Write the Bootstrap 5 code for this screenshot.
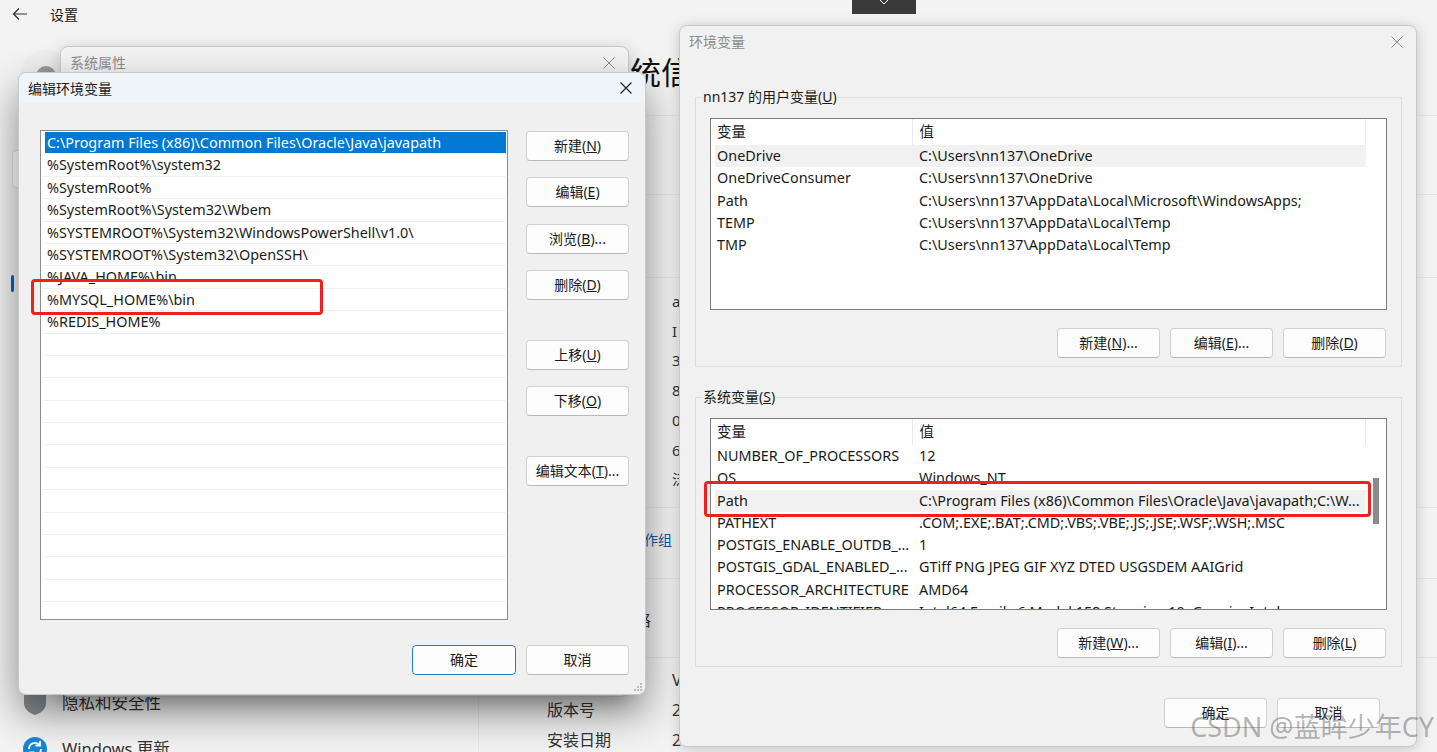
<!DOCTYPE html>
<html lang="zh-CN">
  <head>
    <meta charset="UTF-8" />
    <title>环境变量</title>
    <link href="https://cdn.jsdelivr.net/npm/bootstrap@5.3.3/dist/css/bootstrap.min.css" rel="stylesheet" />
    <style>
      html, body { height: 100%; }
      body {
        position: relative;
        overflow: hidden;
        background: #f3f3f3;
        color: #1a1a1a;
        font-family: "Noto Sans", "Noto Sans CJK SC", sans-serif;
        font-size: 14px;
      }

      /* settings app behind the dialogs */
      .app-head { height: 30px; padding-left: 12px; gap: 22px; padding-bottom: 2px; }
      .app-side {
        width: 479px;
        flex: none;
        height: 722px;
        padding: 0 12px;
        background: linear-gradient(#e6e6e6, #e6e6e6) right bottom / 1px 80px no-repeat;
      }
      .side-avatar { width: 20px; height: 20px; margin: 36px 0 0 24px; border-radius: 50%; background: #9a9a9a; box-shadow: 0 0 0 16px #eeeeee; }
      .side-search { height: 38px; margin: 64px 0 0 0; width: 200px; background: #fff; border: 1px solid #ddd; border-radius: 4px; }
      .side-mark { width: 3px; height: 17px; margin: 87px 0 0 -1px; background: #0067c0; border-radius: 2px; }
      .side-item { gap: 15px; font-size: 16.5px; color: #333; padding-left: 11px; }
      .side-item.first { margin-top: 398px; }
      .side-item.next { margin-top: 21px; }
      .app-main { flex: 1; padding-left: 68px; color: #333; font-size: 16px; }
      .main-title { font-size: 31px; line-height: 44px; margin: 20px 0 0 83px; color: #111; }
      .main-rule { height: 1px; background: #e4e4e4; margin-left: -68px; }
      .info-list { padding-left: 125px; font-size: 15px; line-height: 29.7px; margin-top: 9px; }
      .info-link { color: #0a5ca8; font-size: 14px; line-height: 24px; margin: 20px 0 0 83px; }
      .info-head { line-height: 24px; margin: 29px 0 0 88px; }
      .info-pairs { margin-top: 7px; line-height: 30px; }
      .info-pairs span:first-child { width: 125px; }

      /* dialog windows */
      .win {
        position: absolute;
        display: flex;
        flex-direction: column;
        background: #f0f0f0;
        border: 1px solid #c9c9c9;
        border-radius: 8px;
      }
      .win-back { left: 60px; top: 46px; width: 569px; height: 651px; background: #f3f3f3; box-shadow: 0 4px 18px rgba(0, 0, 0, 0.2); }
      .win-edit { left: 18px; top: 72px; width: 628px; height: 623px; box-shadow: 0 18px 40px rgba(0, 0, 0, 0.45); }
      .win-env { left: 679px; top: 25px; width: 738px; height: 722px; box-shadow: 0 2px 14px rgba(0, 0, 0, 0.2); background: #f1f1f1; }
      .win-title { height: 31px; flex: none; padding: 0 12px 0 9px; font-size: 14px; border-radius: 8px 8px 0 0; }
      .win-edit .win-title { height: 30px; background: #eff5f9; color: #222; }
      .win-back .win-title, .win-env .win-title { color: #8c8c8c; }
      .win-env .win-title { height: 31px; }
      .win-close { width: 14px; height: 14px; display: block; }
      .grip { position: absolute; right: 2px; bottom: 2px; width: 10px; height: 10px; }

      /* buttons */
      .btn.dlg-btn {
        width: 103px;
        height: 30px;
        padding: 0;
        background: #fdfdfd;
        border: 1px solid #d0d0d0;
        border-bottom-color: #b8b8b8;
        border-radius: 4px;
        color: #1a1a1a;
        font-size: 14px;
        line-height: 28px;
      }
      .btn.dlg-btn.is-default { width: 104px; border: 1.5px solid #1d7fd1; }

      /* path list */
      .edit-body { padding: 27px 16px 0 21px; gap: 18px; }
      .path-list { width: 469px; height: 490px; border: 1px solid #8d8d8d; overflow: hidden; background: #fff; border-radius: 0; padding: 1px 1px 0 2px; }
      .path-list .list-group-item {
        flex: none;
        height: 22.4px;
        line-height: 21px;
        padding: 0 0 0 4px;
        font-size: 14.4px;
        color: #1a1a1a;
        white-space: nowrap;
        border: 0;
        border-bottom: 1px solid #f0f0f0;
        border-radius: 0;
        background: #fff;
      }
      .path-list .list-group-item.active { background: #0078d4; color: #fff; margin-left: 2px; padding-left: 2px; }
      .edit-side { width: 103px; margin-top: 1px; }
      .edit-foot { gap: 10px; padding: 25px 16px 0 0; }

      /* variable groups */
      .group-box { margin: 0 14px 0 15px; padding: 0 14px; border: 1px solid #dcdcdc; height: 280px; }
      .group-box.top-group { margin-top: 30px; }
      .group-box + .group-box { margin-top: 20px; }
      .group-box legend { float: none; width: auto; margin: -10px 0 0 -7px; padding: 0 1px 0 0; font-size: 14px; line-height: 20px; background: #f1f1f1; }
      .var-view { height: 192px; margin-top: 11px; border: 1px solid #7e7e7e; background: #fff; overflow: hidden; position: relative; }
      .var-view .table { width: 651px; margin: 0 0 0 4px; table-layout: fixed; --bs-table-bg: transparent; }
      .var-view th, .var-view td {
        padding: 0 0 0 2px;
        height: 22.3px;
        line-height: 21px;
        border: 0;
        font-size: 14.4px;
        font-weight: 400;
        color: #1a1a1a;
        white-space: nowrap;
        overflow: hidden;
      }
      .var-view th { height: 26px; line-height: 26px; vertical-align: top; border-right: 1px solid #ebebeb; }
      .var-view th:first-child { width: 197px; }
      .var-view th:last-child, .var-view td:last-child { padding-left: 7px; }
      .var-view tr.soft td { background: #f1f1f1; }
      .scroll-thumb { position: absolute; right: 7px; top: 59px; width: 6px; height: 46px; background: #8a8a8a; }
      .group-btns { gap: 10px; margin-top: 18px; padding-right: 1px; }
      .env-foot { gap: 10px; padding: 31px 36px 0 0; }

      /* things laid over the picture */
      .red-box { position: absolute; border: 3px solid #f0201e; border-radius: 4px; pointer-events: none; }
      .red-left { left: 31px; top: 279px; width: 292px; height: 36px; }
      .red-right { left: 704px; top: 481px; width: 667px; height: 36px; }
      .top-tab { position: absolute; left: 852px; top: 0; width: 64px; height: 14px; background: #3a3a3a; }
      .top-tab svg { display: block; margin: 0 auto; }
      .mark-text { position: absolute; right: 3px; top: 709px; font-size: 27px; line-height: 36px; color: rgba(90, 90, 90, 0.45); white-space: nowrap; }
    </style>
  </head>
  <body>
    <!-- settings app -->
    <div class="d-flex align-items-center app-head">
      <svg width="16" height="14" viewBox="0 0 16 14" fill="none" stroke="#333" stroke-width="1.2"><path d="M15 7H1.5M7 1.5 1.5 7 7 12.5"/></svg>
      <span>设置</span>
    </div>
    <div class="d-flex">
      <div class="app-side">
        <div class="side-avatar"></div>
        <div class="side-search"></div>
        <div class="side-mark"></div>
        <div class="d-flex align-items-center side-item first">
          <svg width="24" height="26" viewBox="0 0 24 26"><path d="M12 1 23 5v8c0 6-5 10-11 12C6 23 1 19 1 13V5z" fill="#8a8f94"/></svg>
          <span>隐私和安全性</span>
        </div>
        <div class="d-flex align-items-center side-item next">
          <svg width="24" height="24" viewBox="0 0 24 24" fill="none"><circle cx="12" cy="12" r="12" fill="#1a86d6"/><path d="M6 12a6 6 0 0 1 10.500-4M18 12a6 6 0 0 1-10.500 4M17 4v4.500h-4.500M7 20v-4.500h4.500" stroke="#fff" stroke-width="1.8"/></svg>
          <span>Windows 更新</span>
        </div>
      </div>
      <div class="app-main">
        <div class="main-title">统信</div>
        <div class="main-rule" style="margin-top:21px"></div>
        <div class="main-rule" style="margin-top:78px"></div>
        <div class="main-rule" style="margin-top:82px"></div>
        <div class="info-list">
          <div>a</div><div>I</div><div>3</div><div>8</div><div>0</div><div>6</div><div>泛</div>
        </div>
        <div class="main-rule" style="margin-top:12px"></div>
        <div class="info-link">工作组</div>
        <div class="main-rule" style="margin-top:26px"></div>
        <div class="info-head">格</div>
        <div class="main-rule" style="margin-top:25px"></div>
        <div class="info-pairs">
          <div class="d-flex"><span>版本</span><span>V</span></div>
          <div class="d-flex"><span>版本号</span><span>2</span></div>
          <div class="d-flex"><span>安装日期</span><span>2</span></div>
        </div>
      </div>
    </div>

    <!-- system properties, behind -->
    <div class="win win-back">
      <div class="d-flex align-items-center justify-content-between win-title">
        <span>系统属性</span>
        <svg class="win-close" viewBox="0 0 14 14" stroke="#8c8c8c" stroke-width="1"><path d="M1.500 1.500l11 11M12.500 1.500l-11 11"/></svg>
      </div>
    </div>

    <!-- edit environment variable -->
    <div class="win win-edit">
      <div class="d-flex align-items-center justify-content-between win-title">
        <span>编辑环境变量</span>
        <svg class="win-close" viewBox="0 0 14 14" stroke="#222" stroke-width="1.200"><path d="M1.500 1.500l11 11M12.500 1.500l-11 11"/></svg>
      </div>
      <div class="d-flex edit-body">
        <ul class="list-group path-list">
          <li class="list-group-item active">C:\Program Files (x86)\Common Files\Oracle\Java\javapath</li>
          <li class="list-group-item">%SystemRoot%\system32</li>
          <li class="list-group-item">%SystemRoot%</li>
          <li class="list-group-item">%SystemRoot%\System32\Wbem</li>
          <li class="list-group-item">%SYSTEMROOT%\System32\WindowsPowerShell\v1.0\</li>
          <li class="list-group-item">%SYSTEMROOT%\System32\OpenSSH\</li>
          <li class="list-group-item">%JAVA_HOME%\bin</li>
          <li class="list-group-item">%MYSQL_HOME%\bin</li>
          <li class="list-group-item">%REDIS_HOME%</li>
          <li class="list-group-item"></li><li class="list-group-item"></li><li class="list-group-item"></li>
          <li class="list-group-item"></li><li class="list-group-item"></li><li class="list-group-item"></li>
          <li class="list-group-item"></li><li class="list-group-item"></li><li class="list-group-item"></li>
          <li class="list-group-item"></li><li class="list-group-item"></li><li class="list-group-item"></li>
          <li class="list-group-item"></li>
        </ul>
        <div class="d-flex flex-column edit-side">
          <button class="btn dlg-btn">新建(<u>N</u>)</button>
          <button class="btn dlg-btn" style="margin-top:16px">编辑(<u>E</u>)</button>
          <button class="btn dlg-btn" style="margin-top:17px">浏览(<u>B</u>)...</button>
          <button class="btn dlg-btn" style="margin-top:16px">删除(<u>D</u>)</button>
          <button class="btn dlg-btn" style="margin-top:40px">上移(<u>U</u>)</button>
          <button class="btn dlg-btn" style="margin-top:16px">下移(<u>O</u>)</button>
          <button class="btn dlg-btn" style="margin-top:40px">编辑文本(<u>T</u>)...</button>
        </div>
      </div>
      <div class="d-flex justify-content-end edit-foot">
        <button class="btn dlg-btn is-default">确定</button>
        <button class="btn dlg-btn">取消</button>
      </div>
      <svg class="grip" viewBox="0 0 10 10" fill="#bdbdbd"><rect x="7" y="1" width="2" height="2"/><rect x="4" y="4" width="2" height="2"/><rect x="7" y="4" width="2" height="2"/><rect x="1" y="7" width="2" height="2"/><rect x="4" y="7" width="2" height="2"/><rect x="7" y="7" width="2" height="2"/></svg>
    </div>

    <!-- environment variables -->
    <div class="win win-env">
      <div class="d-flex align-items-center justify-content-between win-title">
        <span>环境变量</span>
        <svg class="win-close" viewBox="0 0 14 14" stroke="#8c8c8c" stroke-width="1"><path d="M1.500 1.500l11 11M12.500 1.500l-11 11"/></svg>
      </div>
      <fieldset class="group-box top-group">
        <legend>nn137 的用户变量(<u>U</u>)</legend>
        <div class="var-view">
          <table class="table">
            <thead><tr><th>变量</th><th>值</th></tr></thead>
            <tbody>
              <tr class="soft"><td>OneDrive</td><td>C:\Users\nn137\OneDrive</td></tr>
              <tr><td>OneDriveConsumer</td><td>C:\Users\nn137\OneDrive</td></tr>
              <tr><td>Path</td><td>C:\Users\nn137\AppData\Local\Microsoft\WindowsApps;</td></tr>
              <tr><td>TEMP</td><td>C:\Users\nn137\AppData\Local\Temp</td></tr>
              <tr><td>TMP</td><td>C:\Users\nn137\AppData\Local\Temp</td></tr>
            </tbody>
          </table>
        </div>
        <div class="d-flex justify-content-end group-btns">
          <button class="btn dlg-btn">新建(<u>N</u>)...</button>
          <button class="btn dlg-btn">编辑(<u>E</u>)...</button>
          <button class="btn dlg-btn">删除(<u>D</u>)</button>
        </div>
      </fieldset>
      <fieldset class="group-box">
        <legend>系统变量(<u>S</u>)</legend>
        <div class="var-view">
          <table class="table">
            <thead><tr><th>变量</th><th>值</th></tr></thead>
            <tbody>
              <tr><td>NUMBER_OF_PROCESSORS</td><td>12</td></tr>
              <tr><td>OS</td><td>Windows_NT</td></tr>
              <tr class="soft"><td>Path</td><td>C:\Program Files (x86)\Common Files\Oracle\Java\javapath;C:\W...</td></tr>
              <tr><td>PATHEXT</td><td>.COM;.EXE;.BAT;.CMD;.VBS;.VBE;.JS;.JSE;.WSF;.WSH;.MSC</td></tr>
              <tr><td>POSTGIS_ENABLE_OUTDB_...</td><td>1</td></tr>
              <tr><td>POSTGIS_GDAL_ENABLED_...</td><td>GTiff PNG JPEG GIF XYZ DTED USGSDEM AAIGrid</td></tr>
              <tr><td>PROCESSOR_ARCHITECTURE</td><td>AMD64</td></tr>
              <tr><td>PROCESSOR_IDENTIFIER</td><td>Intel64 Family 6 Model 158 Stepping 10, GenuineIntel</td></tr>
            </tbody>
          </table>
          <div class="scroll-thumb"></div>
        </div>
        <div class="d-flex justify-content-end group-btns">
          <button class="btn dlg-btn">新建(<u>W</u>)...</button>
          <button class="btn dlg-btn">编辑(<u>I</u>)...</button>
          <button class="btn dlg-btn">删除(<u>L</u>)</button>
        </div>
      </fieldset>
      <div class="d-flex justify-content-end env-foot">
        <button class="btn dlg-btn">确定</button>
        <button class="btn dlg-btn">取消</button>
      </div>
    </div>

    <div class="top-tab"><svg width="14" height="8" viewBox="0 0 14 8" fill="none" stroke="#fff"><path d="M3 0 7 4 11 0"/></svg></div>
    <div class="red-box red-left"></div>
    <div class="red-box red-right"></div>
    <div class="mark-text">CSDN @蓝眸少年CY</div>
  </body>
</html>
